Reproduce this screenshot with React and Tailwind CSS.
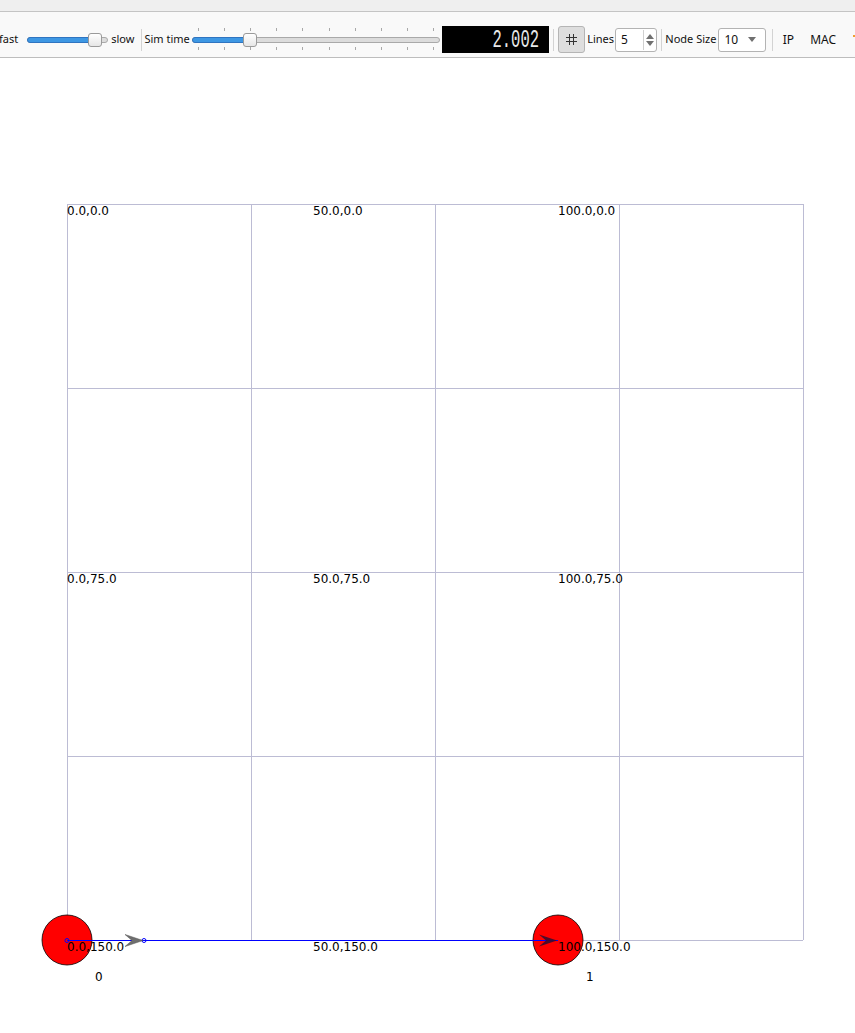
import React from "react";

const ui = { fontFamily: '"Noto Sans", "DejaVu Sans", sans-serif' };
const canvasFont = { fontFamily: '"DejaVu Sans", "Noto Sans", sans-serif' };

// horizontal slider with a filled part and a handle
const Slider = ({ width, fill, ticks }) => (
  <div className="relative h-[27px]" style={{ width }}>
    {ticks && (
      <>
        {ticks.map((t) => (
          <div key={"a" + t} className="absolute top-[2px] h-[3px] w-px bg-[#a8a8a8]" style={{ left: t }} />
        ))}
        {ticks.map((t) => (
          <div key={"b" + t} className="absolute top-[21px] h-[3px] w-px bg-[#a8a8a8]" style={{ left: t }} />
        ))}
      </>
    )}
    <div className="absolute left-0 right-0 top-[11px] h-[6px] rounded-[3px] border border-[#a9a9a9] bg-[#dcdcdc]" />
    <div
      className="absolute left-0 top-[11px] h-[6px] rounded-[3px] border border-[#2f74c0] bg-[#3d97e3]"
      style={{ width: fill }}
    />
    <div
      className="absolute top-[7px] h-[14px] w-[14px] rounded-[3px] border border-[#9a9a9a] bg-gradient-to-b from-white to-[#e6e6e6]"
      style={{ left: fill - 7 }}
    />
  </div>
);

const Sep = () => <div className="h-[22px] w-px bg-[#d3d3d3]" />;

export default function App() {
  const ticks = [6, 32, 58, 84, 110, 137, 163, 189, 215, 241];
  const hLines = [204, 388, 572, 756, 940];
  const vLines = [67, 251, 435, 619, 803];
  const off = 58;

  const labels = [
    { t: "0.0,0.0", x: 67, y: 204 },
    { t: "50.0,0.0", x: 313, y: 204 },
    { t: "100.0,0.0", x: 558, y: 204 },
    { t: "0.0,75.0", x: 67, y: 572 },
    { t: "50.0,75.0", x: 313, y: 572 },
    { t: "100.0,75.0", x: 558, y: 572 },
    { t: "0.0,150.0", x: 67, y: 940 },
    { t: "50.0,150.0", x: 313, y: 940 },
    { t: "100.0,150.0", x: 558, y: 940 },
    { t: "0", x: 95, y: 970 },
    { t: "1", x: 586, y: 970 },
  ];

  return (
    <div className="w-[855px] h-[1033px] overflow-hidden bg-white text-black">
      {/* top strip */}
      <div className="h-[12px] bg-[#efefef] border-b border-[#c4c4c4]" />

      {/* toolbar */}
      <div
        className="h-[46px] bg-[#f9f9f9] border-b border-[#bdbdbd] flex items-center pt-[10px] text-[11px] text-[#111] whitespace-nowrap overflow-hidden"
        style={ui}
      >
        <span className="ml-[-1px]">fast</span>
        <div className="ml-[9px]">
          <Slider width={81} fill={68} />
        </div>
        <span className="ml-[3px]">slow</span>
        <div className="ml-[7px]">
          <Sep />
        </div>
        <span className="ml-[2px]">Sim time</span>
        <div className="ml-[2px]">
          <Slider width={248} fill={58} ticks={ticks} />
        </div>
        <div className="ml-[2px] h-[27px] w-[109px] bg-black flex items-center justify-end pr-[10px] pt-[1px]">
          <span
            className="text-[25px] leading-none text-[#e8e8e8] scale-x-[0.62] origin-right"
            style={{ fontFamily: '"Liberation Mono", monospace' }}
          >
            2.002
          </span>
        </div>
        <div className="ml-[4px]">
          <Sep />
        </div>
        <button className="ml-[4px] h-[27px] w-[28px] rounded-[3px] border border-[#b5b5b5] bg-[#dedede] flex items-center justify-center">
          <svg width="11" height="11" viewBox="0 0 11 11">
            <path d="M3.5 0 V11 M7.5 0 V11 M0 3.5 H11 M0 7.5 H11" stroke="#333" strokeWidth="1" />
          </svg>
        </button>
        <span className="ml-[2px]">Lines</span>
        <div className="ml-[1px] h-[24px] w-[43px] rounded-[3px] border border-[#b3b3b3] bg-white flex items-center justify-between pl-[5px] pr-[2px] text-[12px]">
          <span>5</span>
          <div className="flex flex-col items-center justify-center h-[20px] w-[11px] border-l border-[#d0d0d0] pl-[1px]">
            <svg width="8" height="5" viewBox="0 0 8 5"><path d="M0 5 L4 0 L8 5 Z" fill="#707070" /></svg>
            <svg width="8" height="5" viewBox="0 0 8 5" className="mt-[2px]"><path d="M0 0 L4 5 L8 0 Z" fill="#707070" /></svg>
          </div>
        </div>
        <div className="ml-[4px]">
          <Sep />
        </div>
        <span className="ml-[3px]">Node Size</span>
        <div className="ml-[2px] h-[24px] w-[48px] rounded-[3px] border border-[#b3b3b3] bg-white flex items-center justify-between pl-[5px] pr-[9px] text-[12px]">
          <span>10</span>
          <svg width="8" height="5" viewBox="0 0 8 5"><path d="M0 0 L4 5 L8 0 Z" fill="#707070" /></svg>
        </div>
        <div className="ml-[6px]">
          <Sep />
        </div>
        <span className="ml-[10px] text-[12px]">IP</span>
        <span className="ml-[16px] text-[12px]">MAC</span>
        <div className="ml-[17px] h-[2px] w-[2px] mb-[8px] bg-[#f0a030]" />
      </div>

      {/* scene */}
      <div className="relative h-[975px]" style={canvasFont}>
        <svg className="absolute inset-0" width="855" height="975" viewBox={`0 ${off} 855 975`}>
          {hLines.map((y) => (
            <line key={"h" + y} x1="67" y1={y + 0.5} x2="803" y2={y + 0.5} stroke="#bcbcd4" strokeWidth="1" />
          ))}
          {vLines.map((x) => (
            <line key={"v" + x} x1={x + 0.5} y1="204" x2={x + 0.5} y2="940" stroke="#bcbcd4" strokeWidth="1" />
          ))}
          <circle cx="67" cy="940" r="25" fill="#ff0000" stroke="#000" strokeWidth="0.8" />
          <circle cx="558" cy="940" r="25" fill="#ff0000" stroke="#000" strokeWidth="0.8" />
          <line x1="67" y1="940.5" x2="558" y2="940.5" stroke="#0000ff" strokeWidth="1.2" />
          <circle cx="67" cy="940.5" r="2" fill="none" stroke="#0000ff" strokeWidth="1" />
          <circle cx="144" cy="940.5" r="2" fill="none" stroke="#0000ff" strokeWidth="1" />
          <path d="M143 940.5 L125 934.5 L132 940.5 L125 946.5 Z" fill="#6e6e6e" stroke="#555" strokeWidth="0.5" />
          <path d="M557 940.5 L539 934.5 L546 940.5 L539 946.5 Z" fill="#3a0d30" opacity="0.9" />
        </svg>
        {labels.map((l) => (
          <span
            key={l.t}
            className="absolute text-[12px] leading-[14px] text-black whitespace-nowrap"
            style={{ left: l.x, top: l.y - off }}
          >
            {l.t}
          </span>
        ))}
      </div>
    </div>
  );
}
